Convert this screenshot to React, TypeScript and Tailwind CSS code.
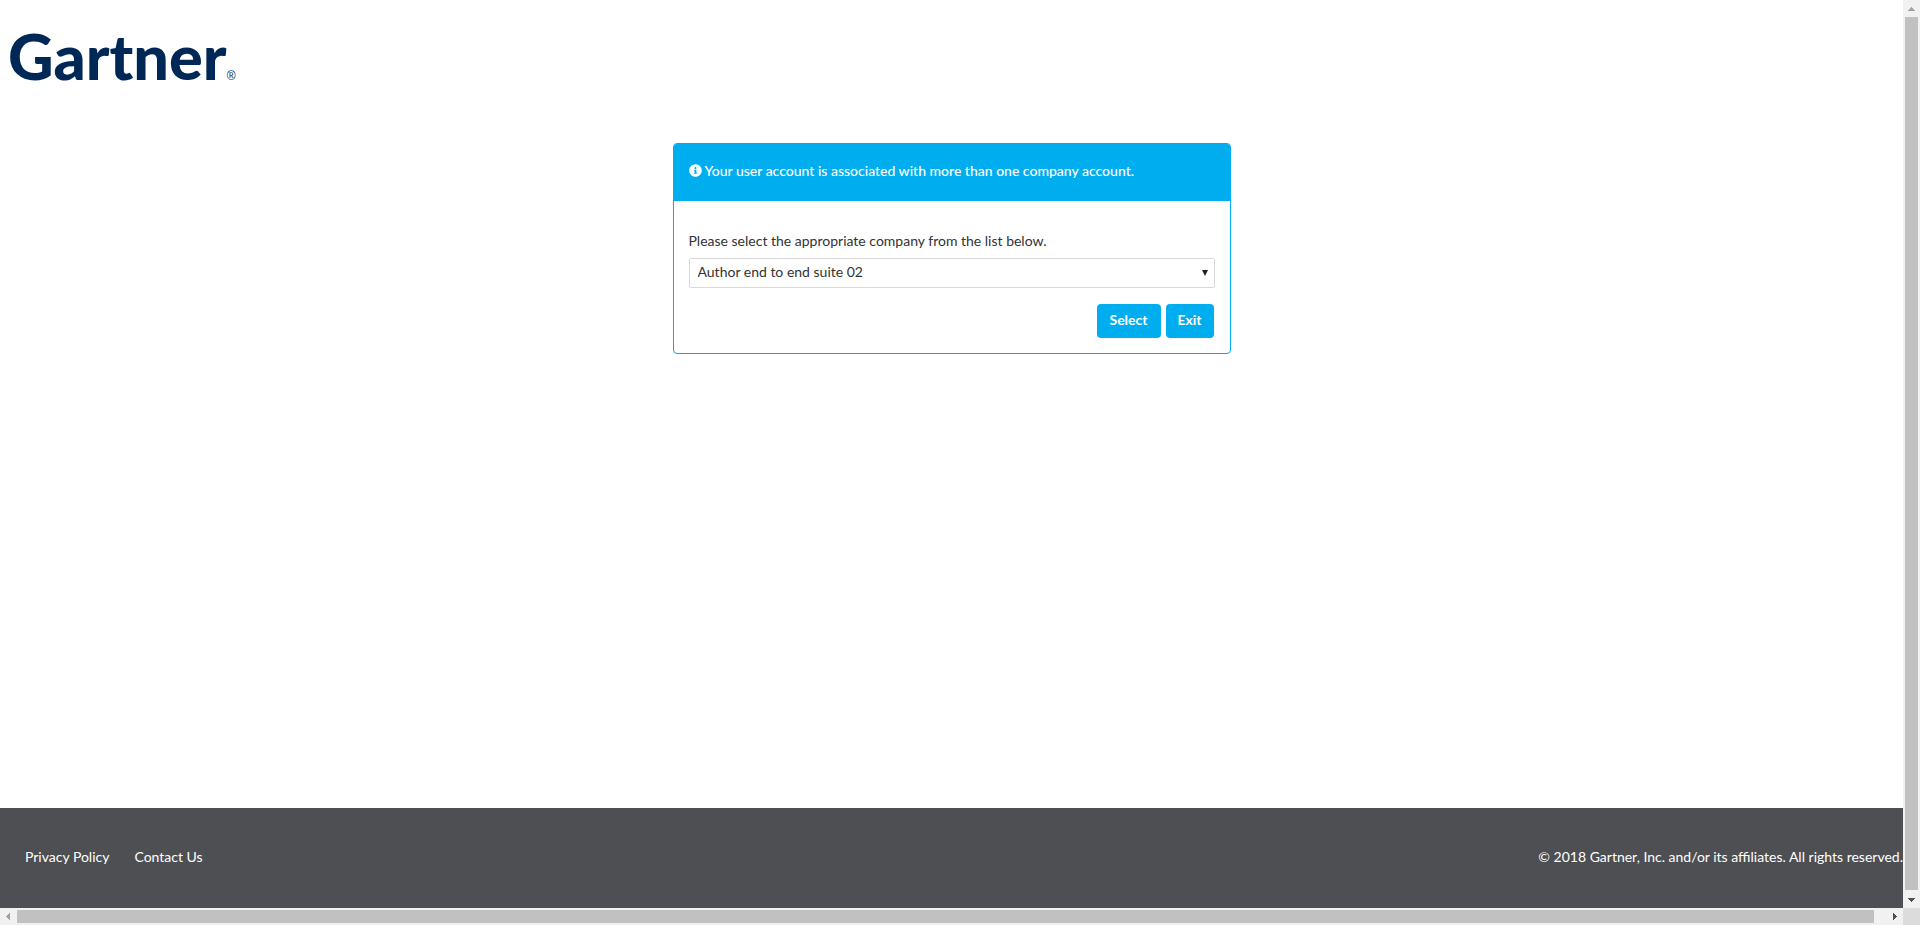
import { useState } from "react";
import { FaInfoCircle } from "react-icons/fa";

function Logo() {
  return (
    <a
      href="#home"
      aria-label="Gartner home"
      className="flex w-fit items-baseline pl-2 font-['Lato',sans-serif] text-[#002856]"
    >
      <span className="text-[63px] leading-20 font-black">Gartner</span>
      <span className="font-['Liberation_Sans',sans-serif] text-xs">®</span>
    </a>
  );
}

function CompanyPanel() {
  const [company, setCompany] = useState("author-02");
  return (
    <section className="mx-auto w-full max-w-[558px] overflow-hidden rounded border border-[#00adef]">
      <h1 className="flex h-[57px] items-center gap-[3px] bg-[#00adef] px-[15px] pb-1 text-sm font-medium text-white">
        <FaInfoCircle className="size-[13px]" aria-hidden="true" />
        Your user account is associated with more than one company account.
      </h1>
      <form className="px-[15px] pt-[30px] pb-[15px]" onSubmit={(e) => e.preventDefault()}>
        <label htmlFor="company" className="block pb-[7px] text-sm">
          Please select the appropriate company from the list below.
        </label>
        <div className="relative">
          <select
            id="company"
            value={company}
            onChange={(e) => setCompany(e.target.value)}
            className="block h-[30px] w-full appearance-none rounded-xs border border-[#d9d9d9] bg-white px-2 pb-0.5 text-sm"
          >
            <option value="author-02">Author end to end suite 02</option>
          </select>
          <svg
            viewBox="0 0 6 6"
            className="pointer-events-none absolute top-3 right-[7px] size-1.5 fill-[#222]"
            aria-hidden="true"
          >
            <path d="M0 0h6L3 6z" />
          </svg>
        </div>
        <div className="mt-4 flex justify-end gap-[5px] pr-px">
          <button type="submit" className="h-[34px] w-16 rounded bg-[#00adef] pb-0.5 text-sm font-bold text-white">
            Select
          </button>
          <button type="button" className="h-[34px] w-12 rounded bg-[#00adef] pb-0.5 text-sm font-bold text-white">
            Exit
          </button>
        </div>
      </form>
    </section>
  );
}

function Footer() {
  return (
    <footer className="flex h-25 items-center justify-between bg-[#4e4f53] pb-0.5 pl-[25px] text-sm text-white">
      <nav className="flex gap-[25px]">
        <a href="#privacy">Privacy Policy</a>
        <a href="#contact">Contact Us</a>
      </nav>
      <p>© 2018 Gartner, Inc. and/or its affiliates. All rights reserved.</p>
    </footer>
  );
}

function VerticalBar() {
  return (
    <div className="flex flex-col items-center bg-[#f1f1f1]" aria-hidden="true">
      <svg viewBox="0 0 17 17" className="size-[17px] fill-[#a3a3a3]">
        <path d="M5 11h7v-1h-1V9h-1V8H9V7H8v1H7v1H6v1H5z" />
      </svg>
      <div className="w-[13px] grow bg-[#c1c1c1]" />
      <svg viewBox="0 0 17 17" className="mt-px size-[17px] fill-[#505050]">
        <path d="M5 7h7v1h-1v1h-1v1H9v1H8v-1H7V9H6V8H5z" />
      </svg>
    </div>
  );
}

function HorizontalBar() {
  return (
    <div className="flex items-center bg-[#f1f1f1]" aria-hidden="true">
      <svg viewBox="0 0 17 17" className="size-[17px] fill-[#a3a3a3]">
        <path d="M10 5v7H9v-1H8v-1H7V9H6V8h1V7h1V6h1V5z" />
      </svg>
      <div className="mr-3 h-[13px] grow bg-[#c1c1c1]" />
      <svg viewBox="0 0 17 17" className="size-[17px] fill-[#505050]">
        <path d="M7 5v7h1v-1h1v-1h1V9h1V8h-1V7H9V6H8V5z" />
      </svg>
    </div>
  );
}

export default function App() {
  return (
    <div className="grid min-h-screen grid-cols-[1fr_17px] grid-rows-[1fr_17px] bg-white font-['Lato',sans-serif] text-[#333]">
      <div className="flex flex-col">
        <header className="pt-4 pb-[47px]">
          <Logo />
        </header>
        <main className="grow">
          <CompanyPanel />
        </main>
        <Footer />
      </div>
      <VerticalBar />
      <HorizontalBar />
      <div className="bg-[#dcdcdc]" />
    </div>
  );
}
